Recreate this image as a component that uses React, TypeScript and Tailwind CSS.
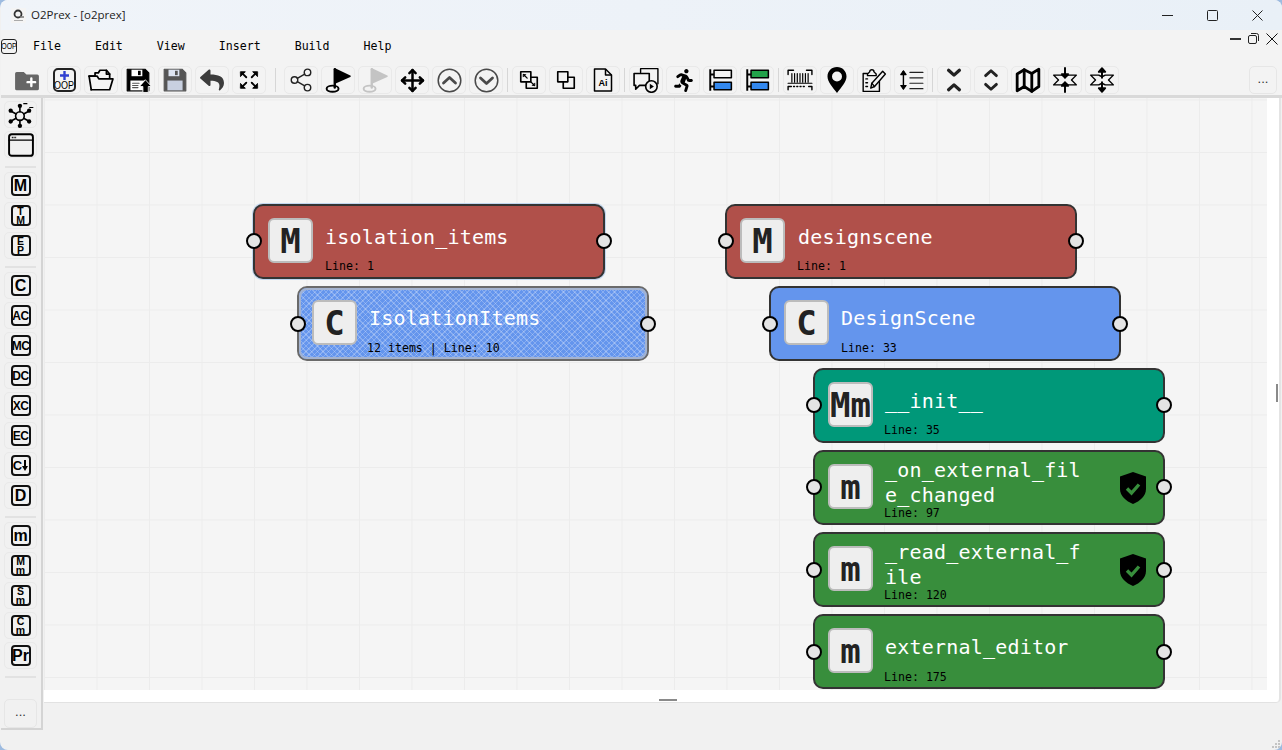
import React from "react";
import { Share2, Move } from "lucide-react";
import { FaReply, FaRunning } from "react-icons/fa";

const mono = "font-['DejaVu_Sans_Mono',monospace]";

const Sv = ({ children, s = 26 }: { children: React.ReactNode; s?: number }) => (
  <svg width={s} height={s} viewBox="0 0 24 24" fill="none" stroke="black" strokeWidth="1.6" strokeLinejoin="round" strokeLinecap="round">
    {children}
  </svg>
);

const FolderPlus = () => (
  <Sv>
    <path d="M1 6a1.5 1.5 0 0 1 1.5-1.5H9l2.5 2.5h10A1.5 1.5 0 0 1 23 8.500V20a1.500 1.500 0 0 1-1.500 1.500h-19A1.500 1.500 0 0 1 1 20z" fill="#666" stroke="none" />
    <path d="M16 10.500v7M12.500 14h7" stroke="white" strokeWidth="2.200" />
  </Sv>
);
const NewOop = () => (
  <div className="w-[23px] h-[24px] border-2 border-[#222] rounded-[5px] flex flex-col items-center justify-start pt-[1px] overflow-hidden">
    <svg width="9" height="9" viewBox="0 0 9 9" className="shrink-0"><path d="M4.500 0v9M0 4.500h9" stroke="#3040d0" strokeWidth="2.400" /></svg>
    <span className="font-['Liberation_Sans',sans-serif] text-[9px] leading-[10px] scale-y-125 text-black whitespace-nowrap">OOP</span>
  </div>
);
const OpenFolder = () => (
  <Sv>
    <path d="M3 21 1 8.500h5.500V5.500h3L11 3h6l3 3.500V10" />
    <path d="M17 3v3.500h3" />
    <path d="M3 21h17l3-10H10L8.500 8.500H1" />
  </Sv>
);
const SaveIcon = ({ c, up }: { c: string; up?: boolean }) => (
  <Sv>
    <path d="M2 2h16.500L22 5.500V22H2z" fill={c} stroke={c} strokeWidth="1" />
    <rect x="6" y="2.500" width="10" height="6" fill={up ? "white" : "#dce3f0"} stroke="none" />
    <rect x="12" y="3.500" width="2.500" height="4" fill={c} stroke="none" />
    <rect x="5" y="12.500" width="14" height="9" fill={up ? "white" : "#c8d0e0"} stroke="none" />
    {up ? (
      <>
        <path d="M7 15h6M7 17h5M7 19h5" stroke="#555" strokeWidth="1" />
        <path d="M19 12l5.500 6H21.500v5.500h-5V18H13.500z" fill="black" stroke="white" strokeWidth=".8" />
      </>
    ) : null}
  </Sv>
);
const Expand = () => (
  <Sv s={22}>
    <path d="M5 5l4 4M5 19l4-4M19 5l-4 4M19 19l-4-4" strokeWidth="2" />
    <path d="M3 3h5L3 8zM21 3h-5l5 5zM3 21h5l-5-5zM21 21h-5l5-5z" fill="black" stroke="black" strokeWidth="1" />
  </Sv>
);
const Flag = ({ c }: { c: string }) => (
  <Sv>
    <path d="M9 2v17" stroke={c} strokeWidth="2.200" />
    <path d="M9.500 2 23 8.500 9.500 14.500z" fill={c} stroke={c} />
    <ellipse cx="7" cy="20" rx="5.500" ry="2.800" stroke={c} strokeWidth="1.800" />
  </Sv>
);
const CircleChev = ({ up }: { up?: boolean }) => (
  <svg width="25" height="25" viewBox="0 0 25 25" fill="none" stroke="#4a4a4a" strokeLinecap="round" strokeLinejoin="round">
    <circle cx="12.500" cy="12.500" r="11.300" strokeWidth="1.500" />
    <path d={up ? "M6.500 15 12.500 9.500 18.500 15" : "M6.500 10 12.500 15.500 18.500 10"} strokeWidth="2.800" />
  </svg>
);
const SquaresArrows = () => (
  <Sv s={22}>
    <rect x="3" y="3" width="11" height="11" strokeWidth="1.800" />
    <path d="M14 9h7v12H9v-7" strokeWidth="1.800" />
    <path d="M6 6l4 4M18 18l-4-4" strokeWidth="1.400" />
    <path d="M6 6h2.500L6 8.500zM18 18h-2.500l2.500-2.500z" fill="black" stroke="black" strokeWidth=".8" />
  </Sv>
);
const SquaresOver = () => (
  <Sv s={22}>
    <path d="M3 3h11v11H3z" strokeWidth="1.800" />
    <path d="M14 9h7v12H9v-7" strokeWidth="1.800" />
  </Sv>
);
const AiFile = () => (
  <div className="relative w-[20px] h-[24px]">
    <svg width="20" height="24" viewBox="0 0 20 24" fill="none" stroke="black" strokeWidth="1.500" strokeLinejoin="round">
      <path d="M1.500 1h11l6 6v16h-17z" />
      <path d="M12.500 1v6h6" />
    </svg>
    <span className="absolute left-0 right-0 top-[10px] text-center font-['Liberation_Sans',sans-serif] font-bold text-[9px] leading-[10px] text-black">Ai</span>
  </div>
);
const ChatVideo = () => (
  <Sv>
    <path d="M7 5V1.500h16v14" strokeWidth="1.300" />
    <path d="M1 6h14v11H6l-3.500 3.500V17H1z" fill="#f3f3f3" strokeWidth="1.500" />
    <circle cx="17" cy="18" r="5.300" fill="#f3f3f3" strokeWidth="1.500" />
    <path d="M15.500 15.500v5l3.800-2.500z" fill="black" stroke="none" />
  </Sv>
);
const Bars = ({ top }: { top: string }) => (
  <Sv>
    <path d="M3 2v20M3 7h4M3 18h4" strokeWidth="1.800" strokeLinecap="butt" />
    <rect x="6.500" y="3" width="16" height="7" fill={top} stroke="black" strokeWidth="1.400" />
    <rect x="6.500" y="14" width="16" height="7" fill="#3388ee" stroke="black" strokeWidth="1.400" />
  </Sv>
);
const Barcode = () => (
  <Sv>
    <path d="M1 7V3h5M23 7V3h-5M1 21v-3h3M23 21v-3h-3" strokeWidth="1.300" />
    <path d="M4.500 6v8M7 6v8M9.500 6v8M12 6v8M14.500 6v8M17 6v8M19.500 6v8" strokeWidth="1.100" />
    <path d="M1 15h22" strokeWidth="1.100" />
    <path d="M6 18h1M9 18h1M12 18h1M15 18h1" strokeWidth="1.200" />
  </Sv>
);
const Pin = () => (
  <svg width="20" height="26" viewBox="0 0 20 26">
    <path fillRule="evenodd" d="M10 0C4.500 0 .5 4.200.5 9.500c0 5.500 5 10.500 9.500 16.500 4.500-6 9.500-11 9.500-16.500C19.500 4.200 15.500 0 10 0zm0 4.500a5 5 0 1 1 0 10 5 5 0 0 1 0-10z" fill="black" />
  </svg>
);
const ClipPen = () => (
  <Sv>
    <path d="M17 11v11.500H2V6h4" strokeWidth="1.300" />
    <path d="M6 6.500 8 4.500a2 2 0 0 1 4 0l2 2v1.500H6z" strokeWidth="1.300" />
    <path d="M4.500 11h2M4.500 14.500h2M4.500 18h2" strokeWidth="1.300" strokeDasharray="1.500 1" />
    <path d="M9 19.500 10 15 20 4l2.500 2.500L12.500 18z" fill="#f3f3f3" strokeWidth="1.300" />
    <path d="M10 15l2.500 3" strokeWidth="1.100" />
  </Sv>
);
const LineH = () => (
  <Sv>
    <path d="M5 4v16" strokeWidth="1.300" />
    <path d="M2.500 7 5 3.500 7.500 7zM2.500 17 5 20.500 7.500 17z" fill="black" strokeWidth="1" />
    <path d="M11 5h12M11 10h12M11 15h12M11 20h12" strokeWidth="1.100" stroke="#222" />
  </Sv>
);
const ChevIn = () => (
  <Sv>
    <path d="M7 3l5 4.500L17 3M7 21l5-4.500 5 4.500" strokeWidth="3" stroke="#222" />
  </Sv>
);
const ChevOut = () => (
  <Sv>
    <path d="M7 8l5-4.500L17 8M7 16l5 4.500L17 16" strokeWidth="2.600" stroke="#222" />
  </Sv>
);
const MapI = () => (
  <Sv>
    <path d="M2 6.500 8.500 2.500 15.500 6 22 2v16l-6.500 4.500L8.500 18 2 22z" strokeWidth="2.600" />
    <path d="M8.500 2.500V18M15.500 6v16.500" strokeWidth="2.600" />
  </Sv>
);
const Star = ({ out }: { out?: boolean }) => (
  <Sv>
    <path d="M1.500 7.500H9l3 1.500 3-1.500h7.500L18 12l4.500 4.500H15L12 15l-3 1.500H1.500L6 12z" strokeWidth="1.300" />
    {out ? (
      <>
        <path d="M12 10V3M12 14v7" strokeWidth="1.800" />
        <path d="M9 4.500 12 1l3 3.500zM9 19.500 12 23l3-3.500z" fill="black" />
      </>
    ) : (
      <>
        <path d="M12 1v7M12 23v-7" strokeWidth="1.800" />
        <path d="M9 6.500 12 10l3-3.500zM9 17.500 12 14l3 3.500z" fill="black" />
      </>
    )}
  </Sv>
);
const Network = () => (
  <Sv>
    <circle cx="11" cy="13" r="4" strokeWidth="1.500" />
    <path d="M11 9V4M11 17v5M7.500 11 3 8.500M7.500 15 3 17.500M14.500 15 19 17.500M14.500 11 19 8.500" strokeWidth="1.500" />
    <circle cx="11" cy="3.500" r="2" fill="black" stroke="none" />
    <circle cx="11" cy="22" r="2" fill="black" stroke="none" />
    <circle cx="2.500" cy="8" r="2" fill="black" stroke="none" />
    <circle cx="2.500" cy="18" r="2" fill="black" stroke="none" />
    <circle cx="19.500" cy="18" r="2" fill="black" stroke="none" />
    <circle cx="19.500" cy="8" r="2" fill="black" stroke="none" />
    <path d="M14.500 1.500h3M20 5h3" strokeWidth="1" />
  </Sv>
);
const WindowI = () => (
  <Sv>
    <rect x="1" y="2" width="22" height="20" rx="2.500" strokeWidth="1.800" />
    <path d="M1 7.500h22" strokeWidth="1.300" />
    <path d="M3.500 5h4" strokeWidth="1.400" strokeDasharray="1 .6" strokeLinecap="butt" />
  </Sv>
);

const Gap = () => <div className="w-[3px] flex justify-center h-[28px] items-center"><div className="w-[1px] h-[24px] bg-[#d6d6d6]" /></div>;

const Tb = ({ children, bare }: { children: React.ReactNode; bare?: boolean }) => (
  <div className={`w-[34px] h-[28px] shrink-0 flex items-center justify-center rounded-[5px] border ${bare ? "border-transparent" : "border-[#e9e9e9]"}`}>{children}</div>
);

const Toolbar = () => (
  <div className="h-[33px] flex items-end pb-[1px] pl-[9px] pr-[4px] gap-[3px] bg-[#f3f3f3]">
    <Tb bare><FolderPlus /></Tb>
    <Tb><NewOop /></Tb>
    <Tb><OpenFolder /></Tb>
    <Tb><SaveIcon c="#000" up /></Tb>
    <Tb><SaveIcon c="#555" /></Tb>
    <Tb><FaReply size={24} color="#3c3c3c" /></Tb>
    <Tb><Expand /></Tb>
    <div className="w-[6px] mx-[3px] h-[28px] flex justify-center items-center"><div className="w-[1px] h-[24px] bg-[#d6d6d6]" /></div>
    <Tb><Share2 size={26} strokeWidth={1.3} color="#222" /></Tb>
    <Tb><Flag c="#000" /></Tb>
    <Tb><Flag c="#c4c4c4" /></Tb>
    <Tb><Move size={25} strokeWidth={2.4} color="#000" /></Tb>
    <Tb><CircleChev up /></Tb>
    <Tb><CircleChev /></Tb>
    <Gap />
    <Tb><SquaresArrows /></Tb>
    <Tb><SquaresOver /></Tb>
    <Tb><AiFile /></Tb>
    <Gap />
    <Tb><ChatVideo /></Tb>
    <Tb><FaRunning size={23} color="#000" /></Tb>
    <Tb><Bars top="#f3f3f3" /></Tb>
    <Tb><Bars top="#22a34a" /></Tb>
    <Gap />
    <Tb><Barcode /></Tb>
    <Tb><Pin /></Tb>
    <Tb><ClipPen /></Tb>
    <Tb><LineH /></Tb>
    <Gap />
    <Tb><ChevIn /></Tb>
    <Tb><ChevOut /></Tb>
    <Tb><MapI /></Tb>
    <Tb><Star /></Tb>
    <Tb><Star out /></Tb>
    <div className="ml-auto mr-[1px] w-[28px] h-[28px] border border-[#e6e6e6] rounded-[5px] flex items-center justify-center font-['Liberation_Sans',sans-serif] text-[13px] leading-[13px] pb-[4px] text-[#333]">...</div>
  </div>
);

const Side = ({ children }: { children: React.ReactNode }) => (
  <div className="w-[33px] h-[27px] shrink-0 rounded-[5px] border border-[#e9e9e9] flex items-center justify-center">{children}</div>
);
const Box = ({ a, b, small, arrow }: { a: string; b?: string; small?: boolean; arrow?: boolean }) => (
  <div className="w-[20px] h-[21px] border-2 border-[#111] rounded-[4px] flex flex-col items-center justify-center overflow-hidden font-['Liberation_Sans',sans-serif] font-bold text-black">
    {b ? (
      <>
        <span className="text-[10.500px] leading-[8.500px]">{a}</span>
        <span className="text-[10.500px] leading-[8.500px]">{b}</span>
      </>
    ) : arrow ? (
      <div className="flex items-center">
        <span className="text-[13px] leading-[14px]">{a}</span>
        <svg width="6" height="11" viewBox="0 0 6 11"><path d="M3 0v7" stroke="black" strokeWidth="2" /><path d="M0 6h6l-3 5z" fill="black" /></svg>
      </div>
    ) : (
      <span className={small ? "text-[12px] leading-[12px] tracking-[-0.5px]" : "text-[16px] leading-[16px]"}>{a}</span>
    )}
  </div>
);

const Sidebar = () => (
  <div className="w-[42px] h-[632px] shrink-0 bg-[#f1f1f1] border-r-2 border-b-2 border-[#d4d4d4] flex flex-col items-center pt-[3px] gap-[3px] pr-[1px]">
    <Side><Network /></Side>
    <Side><WindowI /></Side>
    <div className="w-[31px] h-[2px] shrink-0 bg-[#e2e2e2] mt-[5px] mb-[1px]" />
    <Side><Box a="M" /></Side>
    <Side><Box a="T" b="M" /></Side>
    <Side><Box a="E" b="P" /></Side>
    <div className="w-[31px] h-[2px] shrink-0 bg-[#e2e2e2] mt-[4px] mb-[1px]" />
    <Side><Box a="C" /></Side>
    <Side><Box a="AC" small /></Side>
    <Side><Box a="MC" small /></Side>
    <Side><Box a="DC" small /></Side>
    <Side><Box a="XC" small /></Side>
    <Side><Box a="EC" small /></Side>
    <Side><Box a="C" arrow /></Side>
    <Side><Box a="D" /></Side>
    <div className="w-[31px] h-[2px] shrink-0 bg-[#e2e2e2] mt-[4px] mb-[1px]" />
    <Side><Box a="m" /></Side>
    <Side><Box a="M" b="m" /></Side>
    <Side><Box a="S" b="m" /></Side>
    <Side><Box a="C" b="m" /></Side>
    <Side><Box a="Pr" /></Side>
    <div className="w-[31px] h-[2px] shrink-0 bg-[#e2e2e2] mt-[4px] mb-[18px]" />
    <div className="w-[33px] h-[29px] shrink-0 rounded-[5px] border border-[#e6e6e6] flex items-center justify-center font-['Liberation_Sans',sans-serif] text-[13px] leading-[13px] pb-[4px] text-[#333]">...</div>
  </div>
);

const Shield = () => (
  <svg width="28" height="32" viewBox="0 0 28 32" className="absolute left-[304px] top-[20px]">
    <path d="M14 0 27 4.500V17c0 7-6 12-13 15C7 29 1 24 1 17V4.500z" fill="black" />
    <path d="M8 16.500 12.500 21 20 12.500" fill="none" stroke="#388e3c" strokeWidth="3.400" />
  </svg>
);

type N = {
  x: number; y: number; bg: string; letter: string; title: string; line: string;
  shield?: boolean; wrap?: boolean; hatch?: boolean; sel?: boolean;
  titleY: number; lineY: number; titleX: number; lineX: number; boxY: number; portY: number;
};

const nodes: N[] = [
  { x: 253, y: 204, bg: "bg-[#b0504a]", letter: "M", title: "isolation_items", line: "Line: 1", sel: true, titleY: 17, lineY: 53, titleX: 70, lineX: 70, boxY: 12, portY: 27 },
  { x: 297, y: 286, bg: "bg-[#6495ed]", letter: "C", title: "IsolationItems", line: "12 items | Line: 10", hatch: true, titleY: 16, lineY: 53, titleX: 70, lineX: 68, boxY: 12, portY: 28 },
  { x: 725, y: 204, bg: "bg-[#b0504a]", letter: "M", title: "designscene", line: "Line: 1", titleY: 17, lineY: 53, titleX: 71, lineX: 70, boxY: 12, portY: 27 },
  { x: 769, y: 286, bg: "bg-[#6495ed]", letter: "C", title: "DesignScene", line: "Line: 33", titleY: 16, lineY: 53, titleX: 70, lineX: 70, boxY: 12, portY: 28 },
  { x: 813, y: 368, bg: "bg-[#009879]", letter: "Mm", title: "__init__", line: "Line: 35", titleY: 17, lineY: 53, titleX: 70, lineX: 69, boxY: 12, portY: 27 },
  { x: 813, y: 450, bg: "bg-[#388e3c]", letter: "m", title: "_on_external_file_changed", line: "Line: 97", shield: true, wrap: true, titleY: 6, lineY: 54, titleX: 70, lineX: 69, boxY: 12, portY: 27 },
  { x: 813, y: 532, bg: "bg-[#388e3c]", letter: "m", title: "_read_external_file", line: "Line: 120", shield: true, wrap: true, titleY: 6, lineY: 54, titleX: 70, lineX: 69, boxY: 12, portY: 28 },
  { x: 813, y: 614, bg: "bg-[#388e3c]", letter: "m", title: "external_editor", line: "Line: 175", titleY: 17, lineY: 54, titleX: 70, lineX: 69, boxY: 12, portY: 28 },
];

const Node = ({ n }: { n: N }) => (
  <div
    className={`absolute w-[352px] h-[75px] rounded-[10px] border-2 ${n.hatch ? "border-[#6a6a6a]" : "border-[#333]"} ${n.bg} ${n.sel ? "shadow-[0_0_0_1px_#c2d6ee]" : ""}`}
    style={{ left: n.x - 44, top: n.y - 98 }}
  >
    {n.hatch && (
      <div className="absolute inset-0 rounded-[8px] border-2 border-[#a4b3cf] bg-[image:repeating-linear-gradient(45deg,transparent_0,transparent_3px,rgba(255,255,255,0.24)_3px,rgba(255,255,255,0.24)_4px),repeating-linear-gradient(-45deg,transparent_0,transparent_3px,rgba(255,255,255,0.24)_3px,rgba(255,255,255,0.24)_4px)]" />
    )}
    <div className="absolute left-[13px] w-[45px] h-[45px] rounded-[6px] bg-[#eeeeee] border-2 border-[#bcbcbc] flex items-center justify-center" style={{ top: n.boxY }}>
      <span className={`${mono} font-bold text-[34px] leading-[34px] text-[#222] whitespace-nowrap`}>{n.letter}</span>
    </div>
    {n.wrap ? (
      <div className={`absolute w-[203px] break-all ${mono} text-[20px] tracking-[0.2px] leading-[25px] text-white`} style={{ left: n.titleX, top: n.titleY }}>{n.title}</div>
    ) : (
      <div className={`absolute ${mono} text-[20px] tracking-[0.2px] leading-[28px] text-white whitespace-nowrap`} style={{ left: n.titleX, top: n.titleY }}>{n.title}</div>
    )}
    <div className={`absolute ${mono} text-[11.600px] leading-[14px] text-black whitespace-nowrap`} style={{ left: n.lineX, top: n.lineY }}>{n.line}</div>
    {n.shield && <Shield />}
    <div className="absolute left-[-9px] w-[16px] h-[16px] rounded-full bg-[#e4e4e4] border-2 border-black" style={{ top: n.portY }} />
    <div className="absolute right-[-9px] w-[16px] h-[16px] rounded-full bg-[#e4e4e4] border-2 border-black" style={{ top: n.portY }} />
  </div>
);

export default function App() {
  return (
    <div className="w-[1282px] h-[750px] bg-[#9dbbe0] overflow-hidden">
      <div className="relative w-[1282px] h-[750px] rounded-[8px] overflow-hidden bg-[#f1f1f1] flex flex-col pl-[1px]">
        {/* title bar */}
        <div className="h-[30px] shrink-0 flex items-center bg-[linear-gradient(90deg,#f0f4f9,#edf2f8_50%,#e9f0f7)] pl-[10px]">
          <svg width="15" height="15" viewBox="0 0 15 15" className="mr-[5px]">
            <rect width="15" height="15" fill="#f4f4f4" />
            <circle cx="7" cy="6" r="3.500" fill="none" stroke="#333" strokeWidth="1.800" />
            <path d="M9 9h4" stroke="#777" strokeWidth="1.500" />
            <path d="M3 12.500h9" stroke="#aaa" strokeWidth="1" />
          </svg>
          <span className="font-['Open_Sans',sans-serif] text-[11.500px] text-[#222] whitespace-nowrap">O2Prex - [o2prex]</span>
          <div className="ml-auto flex items-center pr-[19px] gap-[34px]">
            <svg width="11" height="11" viewBox="0 0 11 11"><path d="M0 5.500h11" stroke="#222" strokeWidth="1" /></svg>
            <svg width="11" height="11" viewBox="0 0 11 11"><rect x=".5" y=".5" width="10" height="10" rx="1" fill="none" stroke="#222" strokeWidth="1" /></svg>
            <svg width="11" height="11" viewBox="0 0 11 11"><path d="M.5.500l10 10M10.500.500l-10 10" stroke="#222" strokeWidth="1" /></svg>
          </div>
        </div>
        {/* menu bar */}
        <div className="h-[32px] shrink-0 flex items-center bg-[#f3f3f3]">
          <div className="w-[16px] h-[15px] border border-[#222] rounded-[3px] flex items-center justify-center mr-[16px] overflow-hidden">
            <span className="font-['Liberation_Sans',sans-serif] text-[7px] leading-[8px] scale-y-125 text-black">OOP</span>
          </div>
          <div className={`flex gap-[34px] ${mono} text-[11.600px] leading-[14px] text-black`}>
            <span>File</span><span>Edit</span><span>View</span><span>Insert</span><span>Build</span><span>Help</span>
          </div>
          <div className="ml-auto flex items-center gap-[7px] pr-[4px] mb-[15px]">
            <svg width="11" height="11" viewBox="0 0 11 11"><path d="M0 6h11" stroke="#000" strokeWidth="1.600" /></svg>
            <svg width="11" height="11" viewBox="0 0 11 11" fill="none" stroke="#222" strokeWidth="1"><rect x=".5" y="2.500" width="8" height="8" rx="1.500" /><path d="M3 .5h5.500a2 2 0 0 1 2 2V8" /></svg>
            <svg width="12" height="12" viewBox="0 0 12 12"><path d="M.5.500l11 11M11.500.500l-11 11" stroke="#111" strokeWidth="1" /></svg>
          </div>
        </div>
        {/* toolbar */}
        <div className="shrink-0 border-b-[3px] border-[#d9d9d9]">
          <Toolbar />
        </div>
        <div className="flex flex-1 min-h-0">
          <Sidebar />
          <div className="flex-1 flex flex-col">
            {/* work area */}
            <div className="h-[605px] bg-white rounded-br-[5px] border-b border-[#e2e2e2] border-r-2 border-r-[#e4e4e4] relative ml-[1px] mr-[1px]">
              <div className="absolute left-0 top-0 w-[1223px] h-[592px] bg-[#f5f5f5] bg-[image:linear-gradient(to_right,#ececec_1px,transparent_1px),linear-gradient(to_bottom,#ececec_1px,transparent_1px)] bg-[size:52.5px_52.5px] bg-[position:52.5px_1.5px]" />
              <div className="absolute left-0 top-0 w-[1223px] h-[592px]">
                {nodes.map((n) => (
                  <Node key={n.title} n={n} />
                ))}
              </div>
              <div className="absolute right-[1px] top-[286px] w-[2px] h-[18px] bg-[#8a8a8a]" />
              <div className="absolute left-[615px] top-[601px] w-[18px] h-[2px] bg-[#8a8a8a]" />
            </div>
          </div>
        </div>
        <svg width="10" height="10" viewBox="0 0 10 10" className="absolute right-[1px] bottom-[1px]" fill="#c4c4c4">
          <rect x="7" y="1" width="2" height="2" />
          <rect x="4" y="4" width="2" height="2" />
          <rect x="7" y="4" width="2" height="2" />
          <rect x="1" y="7" width="2" height="2" />
          <rect x="4" y="7" width="2" height="2" />
          <rect x="7" y="7" width="2" height="2" />
        </svg>
      </div>
    </div>
  );
}
